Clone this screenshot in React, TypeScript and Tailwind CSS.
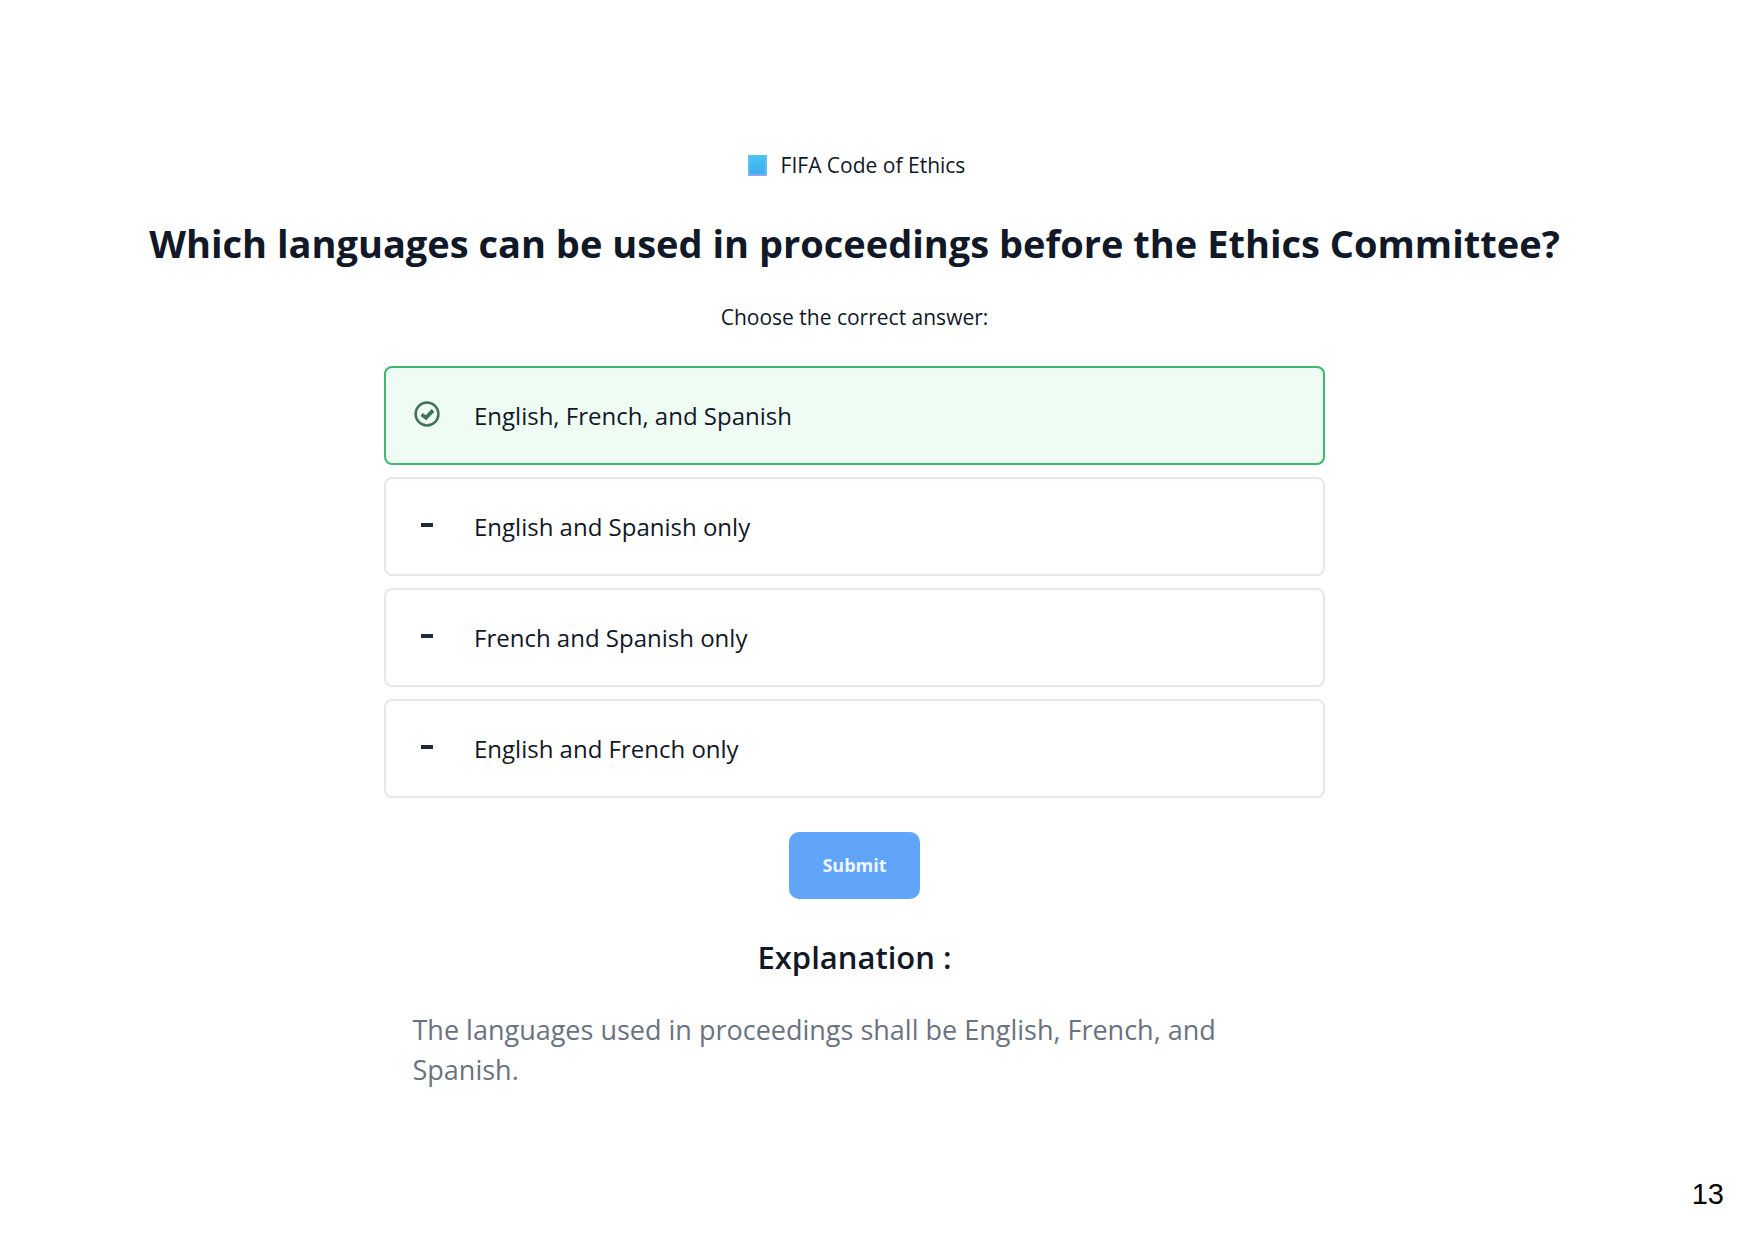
const options = [
  { label: "English, French, and Spanish", correct: true },
  { label: "English and Spanish only", correct: false },
  { label: "French and Spanish only", correct: false },
  { label: "English and French only", correct: false },
];

function CheckIcon() {
  return (
    <svg viewBox="0 0 26 26" className="size-[26px]" fill="none" stroke="#3f7355" aria-hidden="true">
      <circle cx="13" cy="13" r="11.4" strokeWidth="2.5" />
      <path d="M7.6 13.4l4.4 3.4 7-7.4" strokeWidth="3.8" />
    </svg>
  );
}

export default function App() {
  return (
    <div className="flex min-h-screen flex-col bg-white font-['Open_Sans','Noto_Sans',sans-serif] text-[#111827]">
      <main className="flex flex-1 flex-col items-center pr-[46px] pt-[147px]">
        <div className="flex items-center gap-[14px] pl-1 text-[21px] leading-9">
          <span className="h-[21px] w-[19px] border-x-2 border-b-2 border-x-[#62bdf0] border-b-[#8fa9e6] bg-linear-to-b from-[#4cc6ee] to-[#38acf2]" />
          <p>FIFA Code of Ethics</p>
        </div>
        <h1 className="mt-[30px] whitespace-nowrap text-[38px] font-bold leading-[60px]">
          Which languages can be used in proceedings before the Ethics Committee?
        </h1>
        <p className="mt-[26px] text-[21px] leading-9">Choose the correct answer:</p>
        <div className="mt-[31px] flex w-[941px] max-w-full flex-col gap-3">
          {options.map((o) => (
            <button
              key={o.label}
              type="button"
              className={
                o.correct
                  ? "flex h-[99px] items-center rounded-lg border-2 border-[#3cb96c] bg-[#effcf4] pl-7 text-left text-[24px]"
                  : "flex h-[99px] items-center rounded-lg border-2 border-[#e5e7eb] bg-white pl-7 text-left text-[24px]"
              }
            >
              <span className="mb-1 flex w-[60px] items-center">
                {o.correct ? <CheckIcon /> : <span className="ml-[7px] h-1 w-3 bg-[#1f2937]" />}
              </span>
              <span>{o.label}</span>
            </button>
          ))}
        </div>
        <button type="button" className="mt-[34px] h-[67px] w-[131px] rounded-[10px] bg-[#60a5fa] text-[18px] font-bold text-[#eff6ff]">
          Submit
        </button>
        <h2 className="mt-9 text-[31px] font-semibold leading-[44px]">Explanation :</h2>
        <p className="mt-[31px] w-[884px] text-[27px] leading-10 text-[#6b7280]">
          The languages used in proceedings shall be English, French, and Spanish.
        </p>
      </main>
      <footer className="px-[31px] pb-6 text-right font-['Liberation_Sans',sans-serif] text-[29px] text-black">13</footer>
    </div>
  );
}
